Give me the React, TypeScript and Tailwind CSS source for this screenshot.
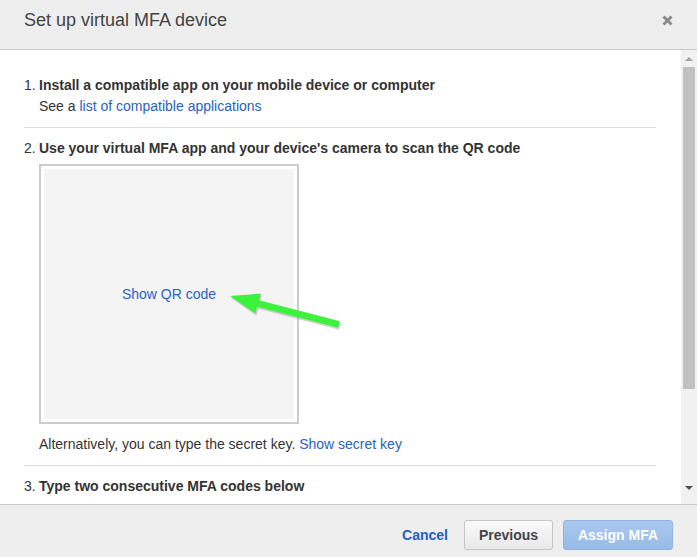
import { useState } from "react";

function CloseIcon() {
  return (
    <svg width="11" height="11" viewBox="0 0 11 11" className="text-[#8a8a8a]">
      <path d="M1.5 1.5 L9.5 9.5 M9.5 1.5 L1.5 9.5" stroke="currentColor" strokeWidth="3" strokeLinecap="butt" />
    </svg>
  );
}

function Step({ n, children }: { n: number; children: React.ReactNode }) {
  return (
    <div className="flex h-5 items-center leading-5">
      <span className="w-[15px] shrink-0">{n}.</span>
      <span className="font-bold">{children}</span>
    </div>
  );
}

function Scrollbar() {
  return (
    <div className="flex w-4 shrink-0 flex-col items-center bg-[#f1f1f1]">
      <div className="flex h-[17px] w-full items-center justify-center">
        <div className="h-0 w-0 border-x-[4px] border-b-[4px] border-x-transparent border-b-[#a3a3a3]" />
      </div>
      <div className="ml-[2px] mr-[2px] h-[322px] w-[12px] self-start bg-[#c1c1c1]" />
      <div className="flex-1" />
      <div className="flex h-[20px] w-full items-start justify-center pt-[2px]">
        <div className="h-0 w-0 border-x-[4px] border-t-[4px] border-x-transparent border-t-[#505050]" />
      </div>
    </div>
  );
}

function Arrow() {
  const pts = "230,296 261,293.5 259,300.3 339.9,321.3 338.1,327.7 257.3,306.7 255.3,313.5";
  return (
    <svg className="pointer-events-none absolute left-0 top-0" width="697" height="557">
      <polygon points={pts} fill="#6a6a6a" opacity="0.3" transform="translate(1,2)" />
      <polygon points={pts} fill="#3df23d" />
    </svg>
  );
}

export default function App() {
  const [showQr, setShowQr] = useState(false);

  return (
    <div className="relative h-[557px] w-[697px] overflow-hidden bg-white font-['Liberation_Sans',Arial,sans-serif] text-[14px] text-[#333]">
      <div className="flex h-[50px] items-center justify-between border-b border-[#cccccc] bg-[#eeeeee] pb-[9px] pl-6 pr-[24px]">
        <h1 className="text-[18px] font-normal text-[#444]">Set up virtual MFA device</h1>
        <CloseIcon />
      </div>

      <div className="flex h-[454px]">
        <div className="flex-1 overflow-hidden pl-6 pr-[25px] pt-[25px]">
          <Step n={1}>Install a compatible app on your mobile device or computer</Step>
          <div className="ml-[15px] mt-[1px] h-5 leading-5">
            See a <a className="text-[#2a62c2]">list of compatible applications</a>
          </div>

          <div className="mt-[11px] h-px bg-[#dddddd]" />

          <div className="mt-[10px]">
            <Step n={2}>Use your virtual MFA app and your device's camera to scan the QR code</Step>
          </div>
          <div className="ml-[15px] mt-[6px] h-[260px] w-[260px] border-2 border-[#cccccc] bg-white p-[3px]">
            <div className="flex h-full w-full items-center justify-center bg-[#f4f4f4]">
              <button onClick={() => setShowQr(!showQr)} className="text-[#2a62c2]">
                Show QR code
              </button>
            </div>
          </div>
          <div className="ml-[15px] mt-[10px] h-5 leading-5">
            Alternatively, you can type the secret key. <a className="text-[#2a62c2]">Show secret key</a>
          </div>

          <div className="mt-[11px] h-px bg-[#dddddd]" />

          <div className="mt-[10px]">
            <Step n={3}>Type two consecutive MFA codes below</Step>
          </div>
        </div>
        <Scrollbar />
      </div>

      <div className="flex h-[53px] items-start justify-end gap-[10px] border-t border-[#cccccc] bg-[#eeeeee] pr-6 pt-[15px]">
        <button className="mr-[6px] h-[30px] font-bold text-[#1f5fc4]">Cancel</button>
        <button className="h-[30px] w-[89px] rounded-[3px] border border-[#c4c4c4] bg-gradient-to-b from-[#fbfbfb] to-[#e8e8e8] font-bold text-[#444]">
          Previous
        </button>
        <button className="h-[30px] w-[110px] rounded-[3px] border border-[#8fb4e2] bg-gradient-to-b from-[#a9c8ee] to-[#97bbe6] font-bold text-white">
          Assign MFA
        </button>
      </div>

      <Arrow />
    </div>
  );
}
